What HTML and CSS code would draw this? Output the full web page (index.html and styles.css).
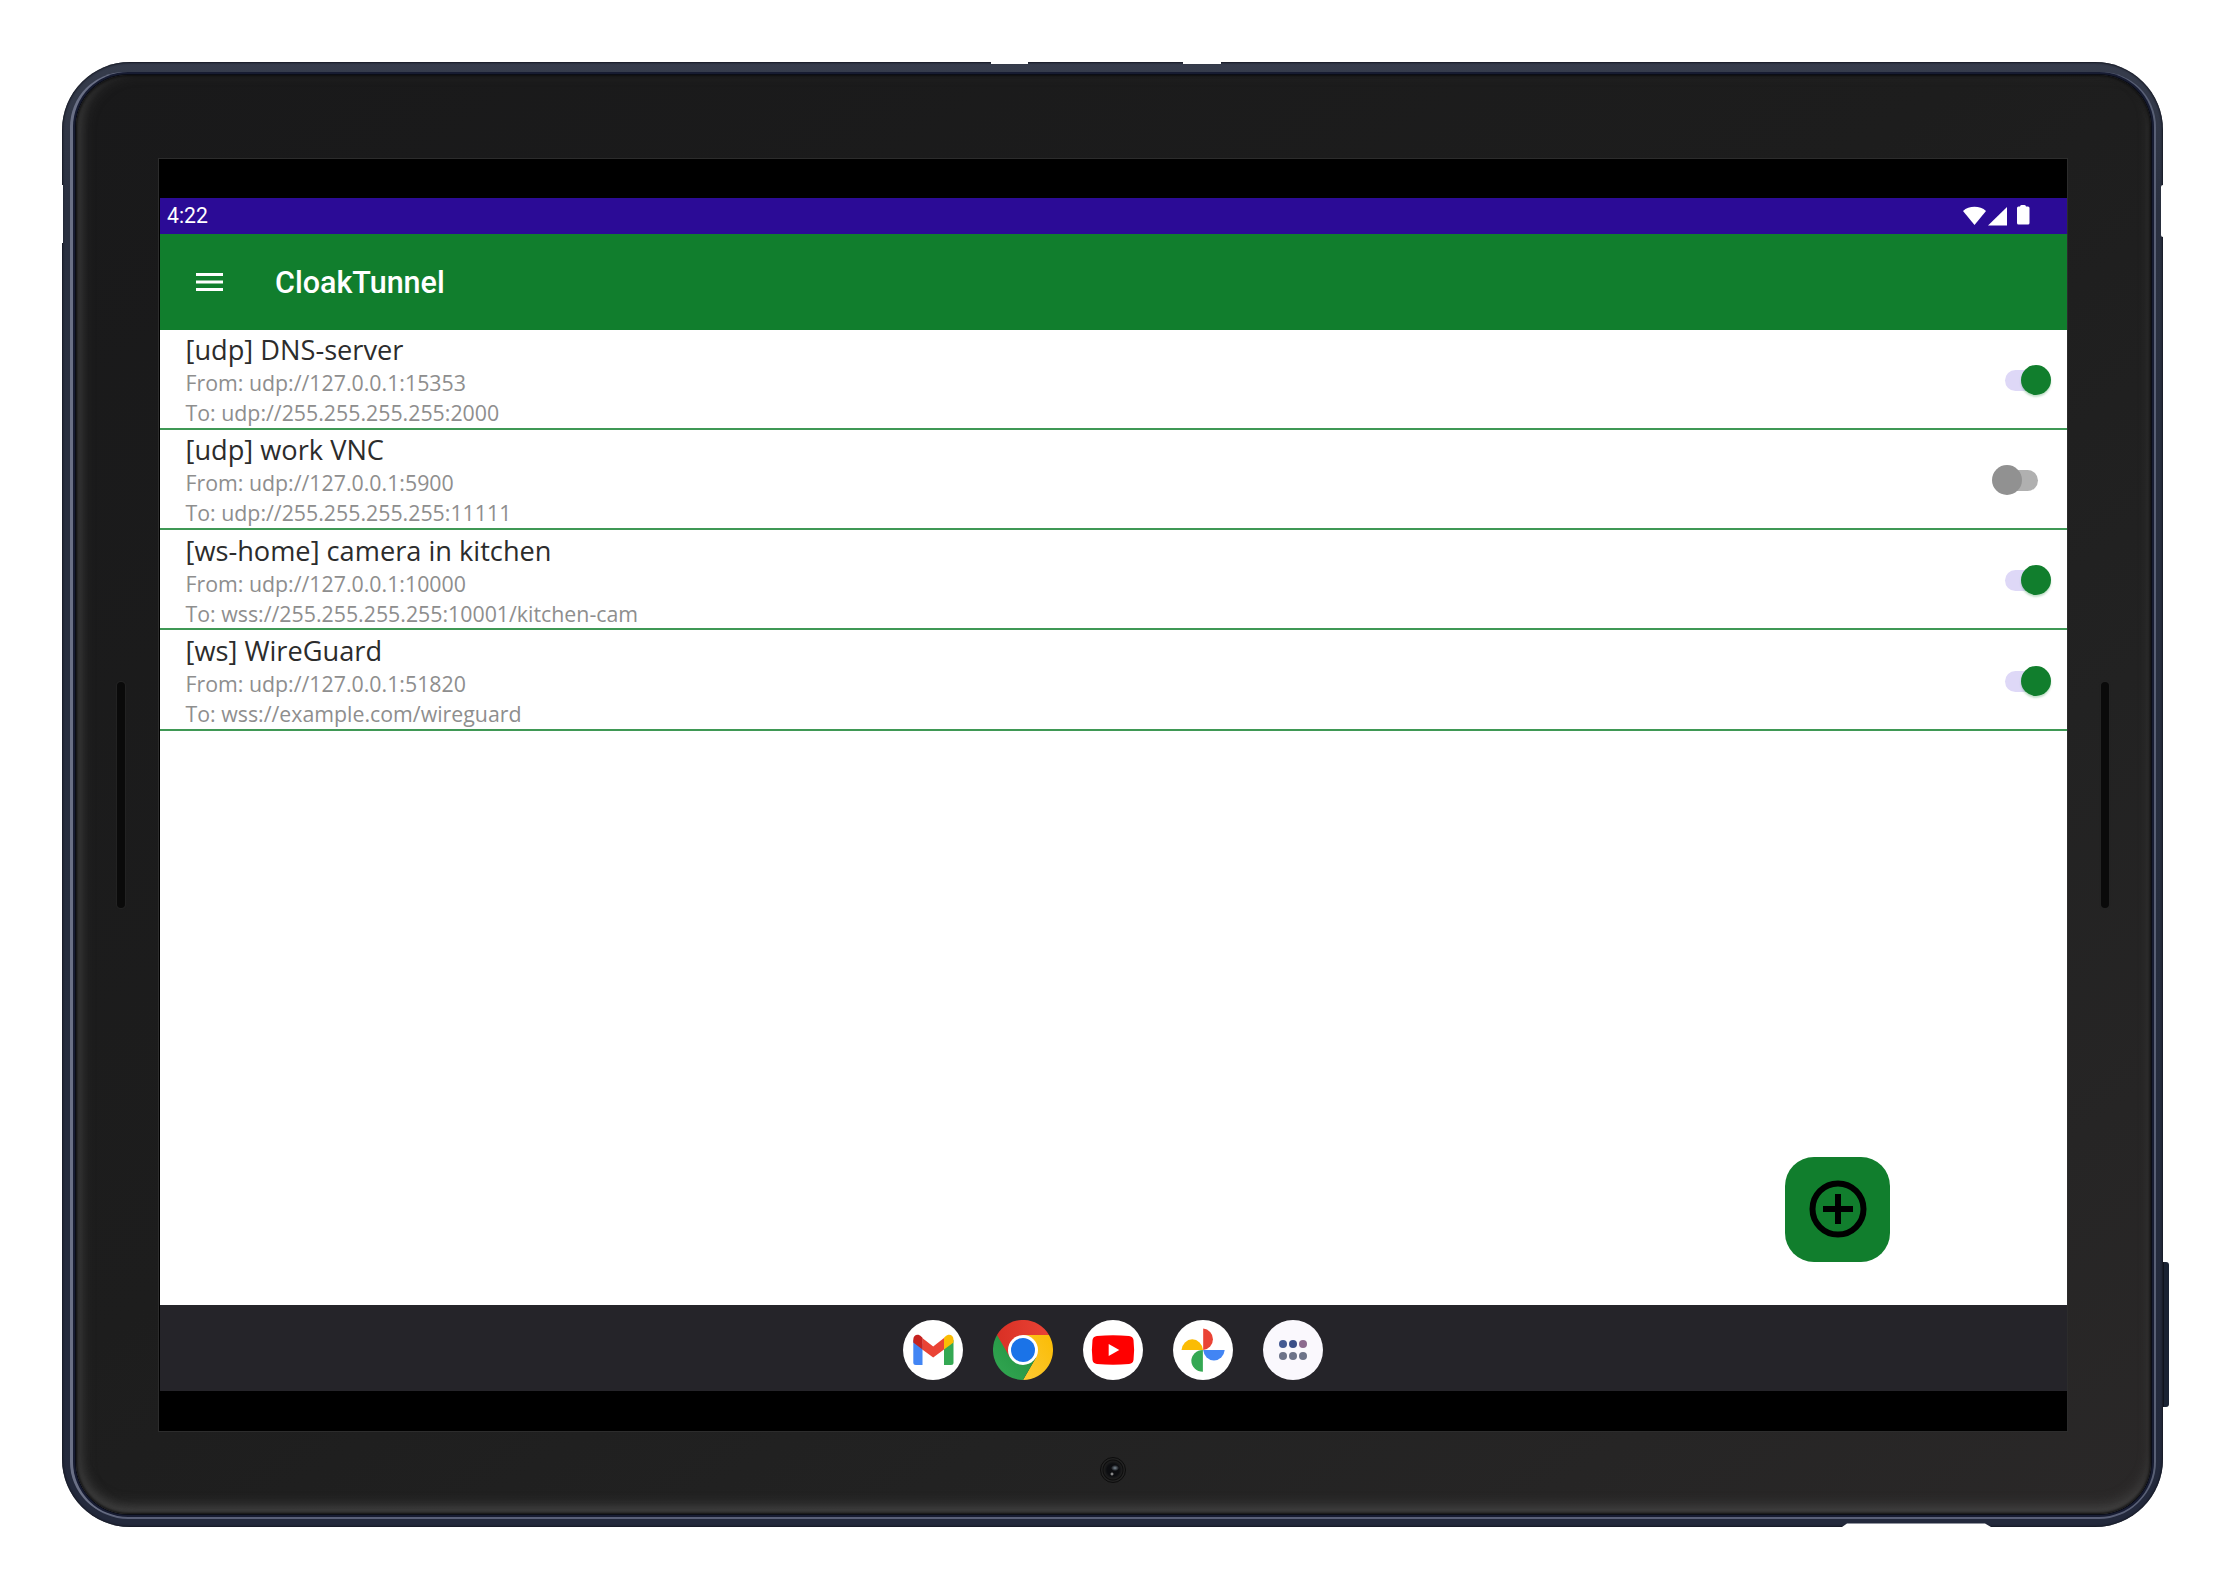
FILE: index.html
```
<!DOCTYPE html>
<html lang="en">
<head>
<meta charset="utf-8">
<title>CloakTunnel</title>
<link rel="stylesheet" href="styles.css">
</head>
<body>
<div class="device">
  <span class="notch notch-top-a"></span>
  <span class="notch notch-top-b"></span>
  <span class="notch notch-left"></span>
  <span class="notch notch-right"></span>
  <svg class="notch-bottom" width="150" height="4" viewBox="0 0 150 4"><path d="M0 4 5 .5H143L149 4Z" fill="#fff"/></svg>
  <span class="power"></span>
  <div class="bezel">
    <span class="speaker speaker-left"></span>
    <span class="speaker speaker-right"></span>
    <span class="camera"></span>
    <div class="screen">
      <div class="status">
        <span class="clock">4:22</span>
        <svg class="status-icons" width="68" height="22" viewBox="0 0 68 22" fill="#fff">
          <path d="M0 6C6 .4 17 .4 23 6L11.500 20Z"/>
          <path d="M25 20.500 44 2V20.500Z"/>
          <path d="M57 1.500q0-1.500 1.500-1.500h3q1.500 0 1.500 1.500h2q1.500 0 1.500 1.500v15q0 1.500-1.500 1.500h-9.500q-1.500 0-1.500-1.500v-15q0-1.500 1.500-1.500Z"/>
        </svg>
      </div>
      <header class="appbar">
        <svg width="28" height="20" viewBox="0 0 28 20" fill="#fff"><path d="M0 1h27v3H0zM0 8.500h27v3H0zM0 16h27v3H0z"/></svg>
        <h1>CloakTunnel</h1>
      </header>
      <main class="content">
        <ul class="tunnels">
          <li class="tunnel">
            <div class="info"><h2>[udp] DNS-server</h2><p>From: udp://127.0.0.1:15353</p><p>To: udp://255.255.255.255:2000</p></div>
            <span class="switch on"></span>
          </li>
          <li class="tunnel">
            <div class="info"><h2>[udp] work VNC</h2><p>From: udp://127.0.0.1:5900</p><p>To: udp://255.255.255.255:11111</p></div>
            <span class="switch"></span>
          </li>
          <li class="tunnel">
            <div class="info"><h2>[ws-home] camera in kitchen</h2><p>From: udp://127.0.0.1:10000</p><p>To: wss://255.255.255.255:10001/kitchen-cam</p></div>
            <span class="switch on"></span>
          </li>
          <li class="tunnel">
            <div class="info"><h2>[ws] WireGuard</h2><p>From: udp://127.0.0.1:51820</p><p>To: wss://example.com/wireguard</p></div>
            <span class="switch on"></span>
          </li>
        </ul>
        <button class="fab" aria-label="Add tunnel">
          <svg width="58" height="58" viewBox="0 0 58 58" fill="none" stroke="#000" stroke-width="6"><circle cx="29" cy="29" r="25.500"/><path d="M14 29H44M29 14V44"/></svg>
        </button>
      </main>
      <nav class="taskbar">
        <svg width="60" height="60" viewBox="0 0 60 60">
          <circle cx="30" cy="30" r="30" fill="#fff"/>
          <path d="M10.300 20V42.500a2.500 2.500 0 0 0 2.500 2.500H19.500V24Z" fill="#4285f4"/>
          <path d="M50.500 20V42.500a2.500 2.500 0 0 1-2.500 2.500H41V24Z" fill="#34a853"/>
          <path d="M19.300 18 30.200 26.500 41 18V29.500L30.200 37.500 19.300 29.500Z" fill="#ea4335"/>
          <path d="M10.300 22.500V19.500C10.300 14.500 15.500 13.500 18.200 16.500L19.500 17.800V29.500Z" fill="#c5221f"/>
          <path d="M50.500 22.500V19.500C50.500 14.500 45.300 13.500 42.300 16.500L41 17.800V29.500Z" fill="#fbbc04"/>
        </svg>
        <svg width="60" height="60" viewBox="0 0 60 60">
          <defs>
            <linearGradient id="cr" x1="0" x2="1"><stop offset="0" stop-color="#d93025"/><stop offset="1" stop-color="#ea4335"/></linearGradient>
            <linearGradient id="cg" x1="1" y1="0" x2="0" y2="1"><stop offset="0" stop-color="#1e8e3e"/><stop offset="1" stop-color="#34a853"/></linearGradient>
            <linearGradient id="cy" x1="0" y1="1" x2="1" y2="0"><stop offset="0" stop-color="#fcc934"/><stop offset="1" stop-color="#fbbc04"/></linearGradient>
          </defs>
          <path d="M30 15H56A30 30 0 0 1 30 60L43 37.500Z" fill="url(#cy)"/>
          <path d="M4 15A30 30 0 0 0 30 60L43 37.500 30 30Z" fill="url(#cg)"/>
          <path d="M4 15A30 30 0 0 1 56 15H30L17 37.500Z" fill="url(#cr)"/>
          <circle cx="30" cy="30" r="15" fill="#fff"/><circle cx="30" cy="30" r="12" fill="#1a73e8"/>
        </svg>
        <svg width="60" height="60" viewBox="0 0 60 60">
          <circle cx="30" cy="30" r="30" fill="#fff"/>
          <path d="M14 16Q30 14.600 46 16Q50 16.500 50.500 20Q51.800 30 50.500 40Q50 43.500 46 44Q30 45.400 14 44Q10 43.500 9.500 40Q8.200 30 9.500 20Q10 16.500 14 16Z" fill="#f00"/>
          <path d="M25.700 24V36L36.300 30Z" fill="#fff"/>
        </svg>
        <svg width="60" height="60" viewBox="0 0 60 60">
          <circle cx="30" cy="30" r="30" fill="#fff"/>
          <path d="M30.200 8.500A10.800 10.800 0 0 1 30.200 30Z" fill="#ea4335"/>
          <path d="M51.700 30A10.800 11.500 0 0 1 30.200 30Z" fill="#4285f4"/>
          <path d="M29.900 51.700A11.500 10.800 0 0 1 29.900 30Z" fill="#34a853"/>
          <path d="M8.500 30A10.800 11.800 0 0 1 30 30Z" fill="#fbbc04"/>
        </svg>
        <svg width="60" height="60" viewBox="0 0 60 60">
          <circle cx="30" cy="30" r="30" fill="#faf8fd"/>
          <circle cx="20" cy="24" r="4" fill="#445a93"/><circle cx="30" cy="24" r="4" fill="#3b4f88"/><circle cx="40" cy="24" r="4" fill="#8c6a8e"/>
          <g fill="#6d7389"><circle cx="20" cy="36" r="4"/><circle cx="30" cy="36" r="4"/><circle cx="40" cy="36" r="4"/></g>
        </svg>
      </nav>
    </div>
  </div>
</div>
</body>
</html>
```
FILE: styles.css
```
* { box-sizing: border-box; margin: 0; padding: 0; }
body { width: 2226px; height: 1590px; background: #fff; padding: 62px 0 0 62px; overflow: hidden; font-family: "Open Sans", "Noto Sans", sans-serif; }

.device {
  position: relative; width: 2101px; height: 1465px; padding: 13px 12px 13px 14px; border-radius: 68px;
  background: linear-gradient(#363c4c, #2a3040 10%, #262d3e 60%, #23293c);
  box-shadow: inset 0 0 2px 1px #151823;
}
.bezel {
  position: relative; width: 2075px; height: 1439px; padding: 84px 0 0 83px; border-radius: 52px;
  background: linear-gradient(146deg, #19191a, #1d1d1d 45%, #222 70%, #2a2828);
  box-shadow: 0 0 0 1px #0b0d16, 0 0 0 3px #171c32, -3px 0 0 3px #6a7086, 2px 0 0 3px #596076, 0 2px 0 3px #5a6078,
    inset 0 0 3px 1px #0a0a0a, inset 9px 0 14px -4px #3a3a3a, inset 0 -9px 14px -2px #484848;
}
.notch { position: absolute; background: #fff; }
.notch-top-a { left: 929px; top: 0; width: 37px; height: 2px; }
.notch-top-b { left: 1121px; top: 0; width: 38px; height: 2px; }
.notch-left { left: 0; top: 123px; width: 1px; height: 58px; }
.notch-right { right: 0; top: 123px; width: 2px; height: 52px; border-radius: 2px 0 0 2px; }
.notch-bottom { position: absolute; left: 1780px; bottom: 0; }
.power { position: absolute; left: 2101px; top: 1200px; width: 6px; height: 145px; border-radius: 0 3px 3px 0; background: #1a2233; border-left: 1px solid #10131d; }
.speaker { position: absolute; top: 607px; width: 8px; height: 226px; border-radius: 4px; background: #0a0a0a; box-shadow: 0 0 1px 1px #242424; }
.speaker-left { left: 41px; }
.speaker-right { left: 2025px; }
.camera {
  position: absolute; left: 1024px; top: 1382px; width: 26px; height: 26px; border-radius: 50%; border: 1px solid #0c0c0c;
  background: radial-gradient(ellipse 4px 3px at 14px 10px, #7d8994, transparent), radial-gradient(circle 2px at 11px 16px, #ccc, transparent), radial-gradient(circle at 12px 12px, #0c0d10 6px, #1e1e1e 9px, #0c0c0c 10px, #232323 11px);
}

.screen { width: 1908px; height: 1272px; background: #000; padding: 39px 0 0 1px; box-shadow: 0 0 0 1px #2c2c2c; display: flex; flex-direction: column; }
.status { height: 36px; background: #2b0b96; color: #fff; display: flex; justify-content: space-between; align-items: center; padding: 0 36px 1px 7px; }
.clock { font: 21.200px/36px Roboto, sans-serif; padding-top: 1px; }
.appbar { height: 95.500px; background: #117e2d; color: #fff; display: flex; align-items: center; gap: 51px; padding-left: 36px; }
.appbar h1 { font: 500 30.500px/40px Roboto, sans-serif; padding-top: 2px; }
.content { position: relative; height: 975.500px; background: #fff; }
.tunnels { list-style: none; }
.tunnel { height: 100.300px; border-bottom: 2px solid #3f9855; display: flex; justify-content: space-between; align-items: center; padding: 2px 15px 0 25.500px; }
.info h2 { font-size: 27.200px; font-weight: 400; line-height: 37px; color: #2c2c2c; }
.info p { font-size: 21.330px; line-height: 30px; color: #8e8e8e; }
.switch { position: relative; width: 76px; height: 30px; }
.switch::before { content: ""; position: absolute; left: 19px; top: 5px; width: 43px; height: 21px; border-radius: 11px; background: #b0b0b0; }
.switch::after { content: ""; position: absolute; left: 16px; top: 0; width: 30px; height: 30px; border-radius: 50%; background: #919191; }
.switch.on::before { left: 29px; background: #ded8f7; }
.switch.on::after { left: 45px; background: #117e2d; box-shadow: 0 2px 2px #117e2d40; }
.fab { position: absolute; right: 177px; bottom: 43.500px; width: 105px; height: 105px; border: 0; border-radius: 29px; background: #117e2d; display: flex; align-items: center; justify-content: center; }
.taskbar { height: 85.500px; background: #252429; display: flex; justify-content: center; align-items: center; gap: 29.800px; padding: 4px 1px 0 0; }
```
